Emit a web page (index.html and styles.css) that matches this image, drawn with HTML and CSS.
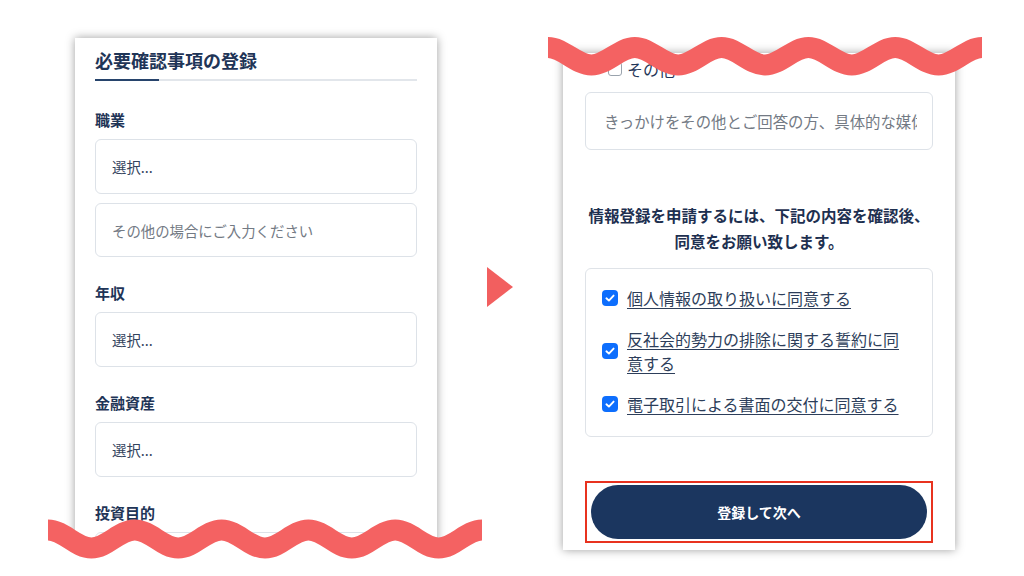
FILE: index.html
```html
<!DOCTYPE html>
<html lang="ja">
<head>
<meta charset="utf-8">
<title>登録フロー</title>
<link rel="stylesheet" href="styles.css">
</head>
<body>
<div class="stage">
  <div class="panel panel-left">
    <div class="card card-left">
      <h2 class="title">必要確認事項の登録</h2>
      <div class="group group-first">
        <div class="label">職業</div>
        <div class="field">選択...</div>
        <div class="field field-second placeholder">その他の場合にご入力ください</div>
      </div>
      <div class="group">
        <div class="label">年収</div>
        <div class="field">選択...</div>
      </div>
      <div class="group">
        <div class="label">金融資産</div>
        <div class="field">選択...</div>
      </div>
      <div class="group">
        <div class="label">投資目的</div>
        <div class="field">選択...</div>
      </div>
    </div>
    <svg class="wave wave-bottom" viewBox="0 0 434 66" width="434" height="66">
      <path class="wave-fill" d="M0,20 C15.6,20 27.8,38 43.4,38 S71.2,20 86.8,20 S114.6,38 130.2,38 S158,20 173.6,20 S201.4,38 217,38 S244.8,20 260.4,20 S288.2,38 303.8,38 S331.6,20 347.2,20 S375,38 390.6,38 S418.4,20 434,20 L434,66 L0,66 Z"/>
      <path class="wave-line" d="M0,20 C15.6,20 27.8,38 43.4,38 S71.2,20 86.8,20 S114.6,38 130.2,38 S158,20 173.6,20 S201.4,38 217,38 S244.8,20 260.4,20 S288.2,38 303.8,38 S331.6,20 347.2,20 S375,38 390.6,38 S418.4,20 434,20"/>
    </svg>
  </div>

  <div class="arrow"></div>

  <div class="panel panel-right">
    <div class="card card-right">
      <div class="other-row"><span class="box-empty"></span><span>その他</span></div>
      <div class="field field-lg placeholder"><span class="clip">きっかけをその他とご回答の方、具体的な媒体をご入力ください</span></div>
      <p class="notice">情報登録を申請するには、下記の内容を確認後、<br>同意をお願い致します。</p>
      <div class="agree-box">
        <div class="agree-item">
          <span class="check"><svg viewBox="0 0 16 16" width="16" height="16"><path d="M4.4 8.3 L6.9 10.6 L11.6 5.6" fill="none" stroke="#fff" stroke-width="1.9" stroke-linecap="round" stroke-linejoin="round"/></svg></span>
          <a class="agree-link">個人情報の取り扱いに同意する</a>
        </div>
        <div class="agree-item">
          <span class="check"><svg viewBox="0 0 16 16" width="16" height="16"><path d="M4.4 8.3 L6.9 10.6 L11.6 5.6" fill="none" stroke="#fff" stroke-width="1.9" stroke-linecap="round" stroke-linejoin="round"/></svg></span>
          <a class="agree-link">反社会的勢力の排除に関する誓約に同意する</a>
        </div>
        <div class="agree-item">
          <span class="check"><svg viewBox="0 0 16 16" width="16" height="16"><path d="M4.4 8.3 L6.9 10.6 L11.6 5.6" fill="none" stroke="#fff" stroke-width="1.9" stroke-linecap="round" stroke-linejoin="round"/></svg></span>
          <a class="agree-link">電子取引による書面の交付に同意する</a>
        </div>
      </div>
      <div class="highlight">
        <button class="submit">登録して次へ</button>
      </div>
    </div>
    <svg class="wave wave-top" viewBox="0 0 434 60" width="434" height="60">
      <path class="wave-line" d="M0,22.5 C15.6,22.5 27.8,40 43.4,40 S71.2,22.5 86.8,22.5 S114.6,40 130.2,40 S158,22.5 173.6,22.5 S201.4,40 217,40 S244.8,22.5 260.4,22.5 S288.2,40 303.8,40 S331.6,22.5 347.2,22.5 S375,40 390.6,40 S418.4,22.5 434,22.5"/>
    </svg>
  </div>
</div>
</body>
</html>
```

FILE: styles.css
```css
* { box-sizing: border-box; }
html, body {
  margin: 0;
  padding: 0;
  background: #ffffff;
}
body {
  width: 1024px;
  height: 576px;
  overflow: hidden;
  font-family: "Noto Sans CJK JP", "Noto Sans", sans-serif;
  color: #1f3557;
}
.stage {
  display: flex;
  align-items: flex-start;
  gap: 50px;
  padding-left: 75px;
}
.panel { position: relative; }
.panel-left { margin-top: 38px; }
.panel-right { margin-top: 53px; }

.card {
  background: #fff;
  box-shadow: 0 0 9px rgba(0, 0, 0, 0.38);
  overflow: hidden;
}
.card-left {
  width: 362px;
  height: 507px;
  padding: 9px 20px 0;
}
.title {
  margin: 0;
  font-size: 18px;
  line-height: 26px;
  font-weight: 700;
  color: #1f3557;
  padding-bottom: 6px;
  background:
    linear-gradient(#27446c, #27446c) left bottom / 64px 2px no-repeat,
    linear-gradient(#e2e6eb, #e2e6eb) left bottom / 100% 2px no-repeat;
  padding-bottom: 8px;
}
.group { margin-top: 25px; }
.group-first { margin-top: 28px; }
.label {
  font-size: 15px;
  line-height: 22px;
  font-weight: 700;
  color: #1f3557;
  margin-bottom: 8px;
}
.field {
  height: 55px;
  border: 1px solid #dde2e8;
  border-radius: 6px;
  display: flex;
  align-items: center;
  padding: 0 16px;
  font-size: 14.4px;
  color: #34445e;
  background: #fff;
}
.field-second {
  margin-top: 9px;
  height: 54px;
}
.placeholder { color: #737a84; }

.arrow {
  margin-top: 267px;
  width: 0;
  height: 0;
  border-left: 26px solid #f25f5f;
  border-top: 20px solid transparent;
  border-bottom: 20px solid transparent;
}

.card-right {
  width: 392px;
  height: 497px;
  padding: 4px 22px 0;
}
.other-row {
  display: flex;
  align-items: center;
  gap: 5px;
  padding-left: 23px;
  height: 24px;
  font-size: 16px;
  color: #1f3557;
}
.box-empty {
  width: 14px;
  height: 14px;
  border: 1px solid #9aa3ad;
  border-radius: 3px;
  background: #fff;
}
.field-lg {
  margin-top: 11px;
  height: 58px;
  padding: 0 15px 0 18px;
  font-size: 15.4px;
}
.clip {
  display: block;
  width: 100%;
  overflow: hidden;
  white-space: nowrap;
}
.notice {
  margin: 52px 0 0;
  text-align: center;
  font-size: 15.5px;
  line-height: 26px;
  font-weight: 700;
  color: #1e3050;
}
.agree-box {
  margin-top: 14px;
  border: 1px solid #dfe3e8;
  border-radius: 6px;
  padding: 17px 20px 20px 16px;
  display: flex;
  flex-direction: column;
  gap: 17px;
}
.agree-item {
  display: flex;
  align-items: center;
  gap: 9px;
}
.check {
  flex: none;
  width: 16px;
  height: 16px;
  border-radius: 4px;
  background: #0d6efd;
  display: flex;
}
.agree-link {
  font-size: 16px;
  line-height: 24px;
  color: #2d3e5a;
  text-decoration: underline;
  text-decoration-thickness: 1px;
  text-underline-offset: 3px;
}
.highlight {
  margin-top: 44px;
  border: 2px solid #e8321f;
  padding: 2px 4px;
}
.submit {
  display: block;
  width: 100%;
  height: 54px;
  border: none;
  border-radius: 27px;
  background: #1b365f;
  color: #fff;
  font-family: "Noto Sans CJK JP", sans-serif;
  font-size: 14px;
  font-weight: 700;
}

.wave {
  position: absolute;
  display: block;
}
.wave-bottom { left: -27px; top: 472px; }
.wave-top { left: -15px; top: -28px; }
.wave-fill { fill: #ffffff; stroke: none; }
.wave-line {
  fill: none;
  stroke: #f46262;
  stroke-width: 21;
  stroke-linecap: butt;
}
```
